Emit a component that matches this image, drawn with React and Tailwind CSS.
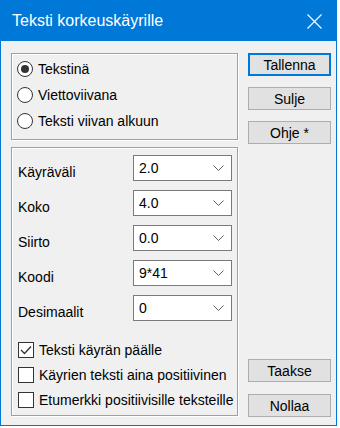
import { useState } from 'react'

const FONT = { fontFamily: '"Liberation Sans", Arial, sans-serif' }

const FIELDS = [
  { label: 'Käyräväli', value: '2.0' },
  { label: 'Koko', value: '4.0' },
  { label: 'Siirto', value: '0.0' },
  { label: 'Koodi', value: '9*41' },
  { label: 'Desimaalit', value: '0' },
]

const RADIOS = ['Tekstinä', 'Viettoviivana', 'Teksti viivan alkuun']

const CHECKS = [
  { label: 'Teksti käyrän päälle', on: true },
  { label: 'Käyrien teksti aina positiivinen', on: false },
  { label: 'Etumerkki positiivisille teksteille', on: false },
]

function Btn({ children, primary }) {
  return (
    <button
      className={`w-[83px] h-[23px] bg-[#e1e1e1] text-[14px] leading-none text-black ${
        primary ? 'border-2 border-[#0078d7]' : 'border border-[#adadad]'
      }`}
    >
      {children}
    </button>
  )
}

function Chevron() {
  return (
    <svg width="11" height="6" viewBox="0 0 11 6" className="shrink-0">
      <path d="M0.5 0.5 L5.5 5.5 L10.5 0.5" fill="none" stroke="#606060" strokeWidth="1" />
    </svg>
  )
}

export default function App() {
  const [radio, setRadio] = useState(0)
  const [checks, setChecks] = useState(CHECKS.map(c => c.on))

  return (
    <div className="w-[340px] h-[428px] bg-white" style={FONT}>
      <div className="w-[337px] h-[426px] border border-[#0078d7] bg-[#f0f0f0] flex flex-col">
        {/* title bar */}
        <div className="h-[40px] bg-[#0078d7] flex items-center justify-between pl-[11px] pr-[14px] shrink-0">
          <span className="text-white text-[16px] leading-none pb-[1px]">Teksti korkeuskäyrille</span>
          <svg width="15" height="15" viewBox="0 0 15 15">
            <path d="M0.5 0.5 L14.5 14.5 M14.5 0.5 L0.5 14.5" stroke="#fff" strokeWidth="1.2" />
          </svg>
        </div>

        <div className="flex pt-[12px] pl-[10px] gap-[10px]">
          {/* left column */}
          <div className="flex flex-col gap-[7px] w-[227px]">
            <div className="border border-[#a0a0a0] shadow-[inset_1px_1px_0_#fff,1px_1px_0_#fff] pt-[2px] pb-[5px] pl-[5px]">
              {RADIOS.map((r, i) => (
                <div key={r} className="h-[26px] flex items-center gap-[5px] cursor-default" onClick={() => setRadio(i)}>
                  <span className="w-[16px] h-[16px] rounded-full border border-[#333] bg-white flex items-center justify-center shrink-0">
                    {radio === i && <span className="w-[8px] h-[8px] rounded-full bg-[#333]" />}
                  </span>
                  <span className="text-[14px] text-black leading-none">{r}</span>
                </div>
              ))}
            </div>

            <div className="border border-[#a0a0a0] shadow-[inset_1px_1px_0_#fff,1px_1px_0_#fff] pt-[7px] pb-[3px] pl-[6px] pr-[5px]">
              <div className="flex flex-col gap-[9px]">
                {FIELDS.map(f => (
                  <div key={f.label} className="flex items-center justify-between h-[26px]">
                    <span className="text-[14px] text-black leading-none mt-[8px]">{f.label}</span>
                    <div className="w-[99px] h-[26px] bg-white border border-[#7a7a7a] flex items-center justify-between pl-[5px] pr-[7px]">
                      <span className="text-[14px] text-black leading-none">{f.value}</span>
                      <Chevron />
                    </div>
                  </div>
                ))}
              </div>
              <div className="flex flex-col mt-[16px]">
                {CHECKS.map((c, i) => (
                  <div
                    key={c.label}
                    className="h-[25px] flex items-center gap-[5px] cursor-default"
                    onClick={() => setChecks(checks.map((v, j) => (j === i ? !v : v)))}
                  >
                    <span className="w-[16px] h-[16px] border border-[#333] bg-white flex items-center justify-center shrink-0">
                      {checks[i] && (
                        <svg width="12" height="10" viewBox="0 0 12 10">
                          <path d="M1 5 L4.5 8.5 L11 1.5" fill="none" stroke="#333" strokeWidth="1.3" />
                        </svg>
                      )}
                    </span>
                    <span className="text-[14px] text-black leading-none whitespace-nowrap">{c.label}</span>
                  </div>
                ))}
              </div>
            </div>
          </div>

          {/* right column */}
          <div className="flex flex-col justify-between h-[364px]">
            <div className="flex flex-col gap-[11px]">
              <Btn primary>Tallenna</Btn>
              <Btn>Sulje</Btn>
              <Btn>Ohje *</Btn>
            </div>
            <div className="flex flex-col gap-[12px]">
              <Btn>Taakse</Btn>
              <Btn>Nollaa</Btn>
            </div>
          </div>
        </div>
      </div>
    </div>
  )
}
